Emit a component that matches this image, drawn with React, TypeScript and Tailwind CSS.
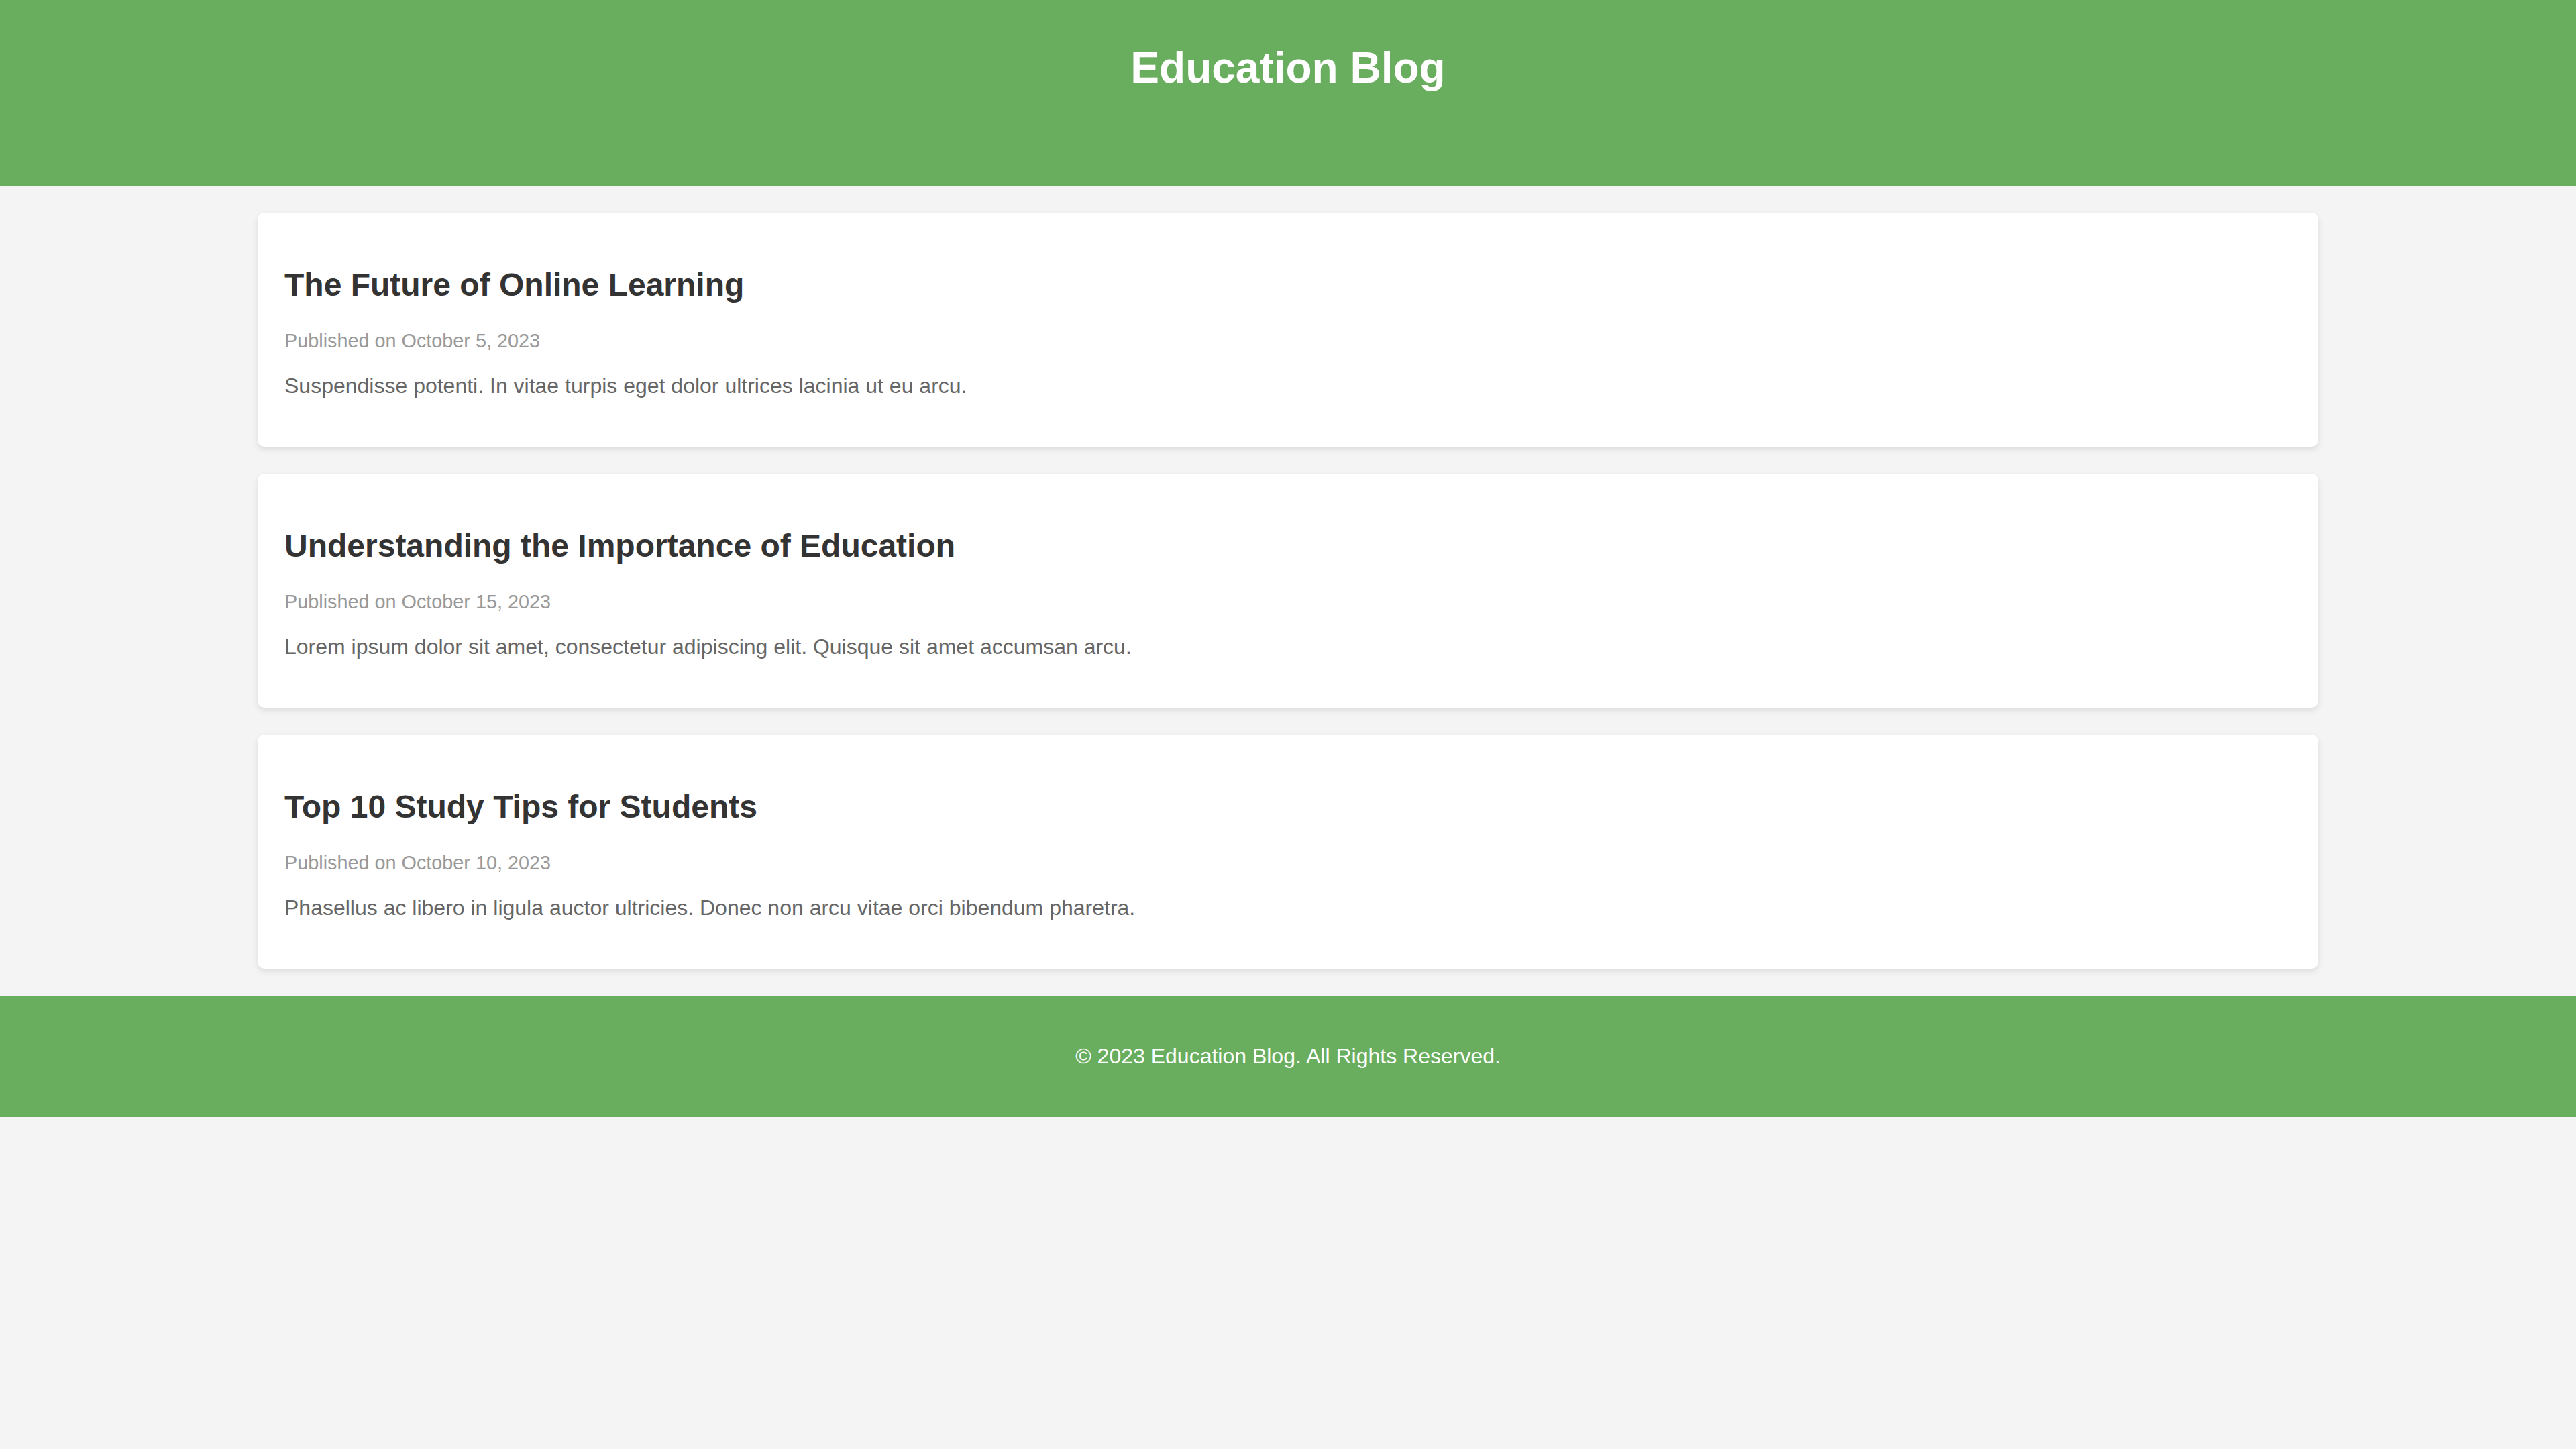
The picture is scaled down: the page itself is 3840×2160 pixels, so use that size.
const posts = [
  {
    title: "The Future of Online Learning",
    date: "October 5, 2023",
    excerpt: "Suspendisse potenti. In vitae turpis eget dolor ultrices lacinia ut eu arcu.",
  },
  {
    title: "Understanding the Importance of Education",
    date: "October 15, 2023",
    excerpt: "Lorem ipsum dolor sit amet, consectetur adipiscing elit. Quisque sit amet accumsan arcu.",
  },
  {
    title: "Top 10 Study Tips for Students",
    date: "October 10, 2023",
    excerpt: "Phasellus ac libero in ligula auctor ultricies. Donec non arcu vitae orci bibendum pharetra.",
  },
];

export default function App() {
  return (
    <div className="min-h-screen bg-[#f4f4f4] font-['Liberation_Sans',Arial,sans-serif] leading-[normal] text-[32px]">
      {/* Header */}
      <header className="h-[277px] bg-[#69ae5e] pt-[64px] text-center text-white">
        <h1 className="text-[64px] font-bold">Education Blog</h1>
      </header>

      {/* Posts */}
      <main className="flex flex-col gap-[40px] py-[40px]">
        {posts.map((post) => (
          <article
            key={post.title}
            className="w-[80%] mx-auto bg-white rounded-[10px] p-[40px] shadow-[0_4px_10px_rgba(0,0,0,0.1)]"
          >
            <h2 className="text-[48px] font-bold text-[#333] my-[40px]">{post.title}</h2>
            <p className="text-[28.8px] text-[#999] my-[28px]">Published on {post.date}</p>
            <p className="text-[32px] text-[#666] mt-[32px] mb-[32px]">{post.excerpt}</p>
          </article>
        ))}
      </main>

      {/* Footer */}
      <footer className="bg-[#69ae5e] py-[72px] text-center text-white">
        <p className="text-[32px]">© 2023 Education Blog. All Rights Reserved.</p>
      </footer>
    </div>
  );
}
